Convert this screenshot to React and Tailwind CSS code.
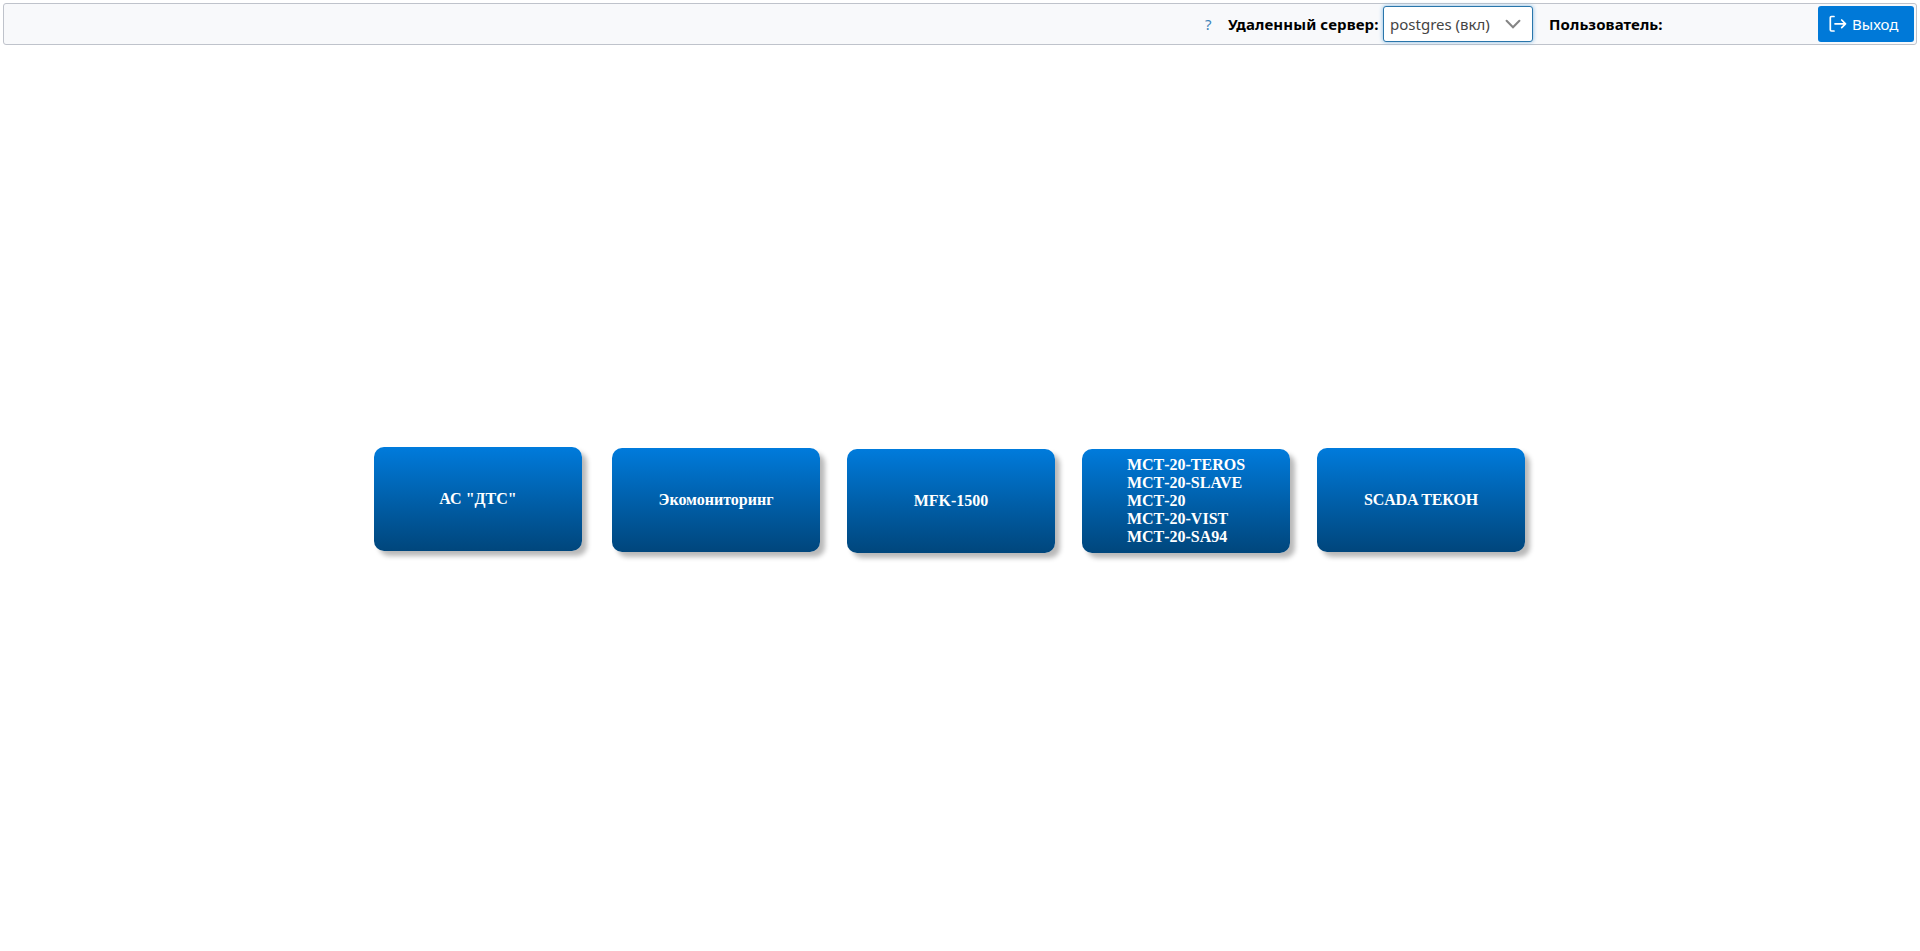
const cards = [
  { lines: ['АС "ДТС"'], place: "mt-0 ml-0", text: "tracking-normal" },
  { lines: ["Экомониторинг"], place: "mt-px ml-[30px]", text: "tracking-normal" },
  { lines: ["MFK-1500"], place: "mt-0.5 ml-[27px]", text: "tracking-normal" },
  {
    lines: ["МСТ-20-TEROS", "МСТ-20-SLAVE", "МСТ-20", "МСТ-20-VIST", "МСТ-20-SA94"],
    place: "mt-0.5 ml-[27px]",
    text: "tracking-normal",
  },
  { lines: ["SCADA ТЕКОН"], place: "mt-px ml-[27px]", text: "tracking-[-0.15px]" },
];

function ExitIcon() {
  return (
    <svg className="h-[18px] w-[18px] shrink-0" viewBox="0 0 18 18" fill="none" stroke="currentColor" strokeWidth="1.7" strokeLinecap="round" strokeLinejoin="round">
      <path d="M5 1.5H2.5Q1.3 1.5 1.3 2.7V14.8Q1.3 16 2.5 16H5" />
      <path d="M6 8.8H16.5M12.7 5L16.5 8.8L12.7 12.6" />
    </svg>
  );
}

function Toolbar() {
  return (
    <header className="flex h-[42px] items-center rounded-[3px] border border-[#bfc3cb] bg-[#f8f9fb] pr-0.5 font-['Noto_Sans',sans-serif] text-[15px] leading-5">
      <a className="ml-auto w-[23px] shrink-0 text-[#3f83b8]">?</a>
      <span className="w-[155px] shrink-0 whitespace-nowrap font-bold tracking-[0.1px] text-black">Удаленный сервер:</span>
      <div className="flex h-9 w-[150px] shrink-0 items-center justify-between rounded-[3px] border border-[#2a76ab] bg-white pr-[11px] pl-1.5 text-[#444] shadow-[0_0_4px_#7fb6e0]">
        <span className="whitespace-nowrap">postgres (вкл)</span>
        <svg className="h-4 w-4 shrink-0" viewBox="0 0 16 16" fill="none" stroke="#858585" strokeWidth="2.1" strokeLinecap="round">
          <path d="M1.6 4.8L8 11.2L14.4 4.8" />
        </svg>
      </div>
      <span className="ml-4 w-[269px] shrink-0 whitespace-nowrap font-bold tracking-[0.1px] text-black">Пользователь:</span>
      <button className="flex h-9 w-24 shrink-0 items-center gap-[5px] rounded-[3px] bg-[#0079d8] pl-[11px] text-white">
        <ExitIcon />
        <span>Выход</span>
      </button>
    </header>
  );
}

export default function App() {
  return (
    <div className="h-[951px] overflow-hidden bg-white p-[3px]">
      <Toolbar />
      <main className="mt-[402px] ml-[371px] flex items-start font-['Liberation_Serif',serif]">
        {cards.map((card) => (
          <div
            key={card.lines[0]}
            className={`flex h-[104px] w-[208px] shrink-0 items-center justify-center rounded-[10px] bg-linear-to-b from-[#007bdc] to-[#00467c] text-[16px] font-bold text-white shadow-[5px_5px_5px_rgba(0,0,0,0.28)] ${card.place} ${card.text}`}
          >
            <div className="leading-[18px]">
              {card.lines.map((line) => (
                <div key={line}>{line}</div>
              ))}
            </div>
          </div>
        ))}
      </main>
    </div>
  );
}
